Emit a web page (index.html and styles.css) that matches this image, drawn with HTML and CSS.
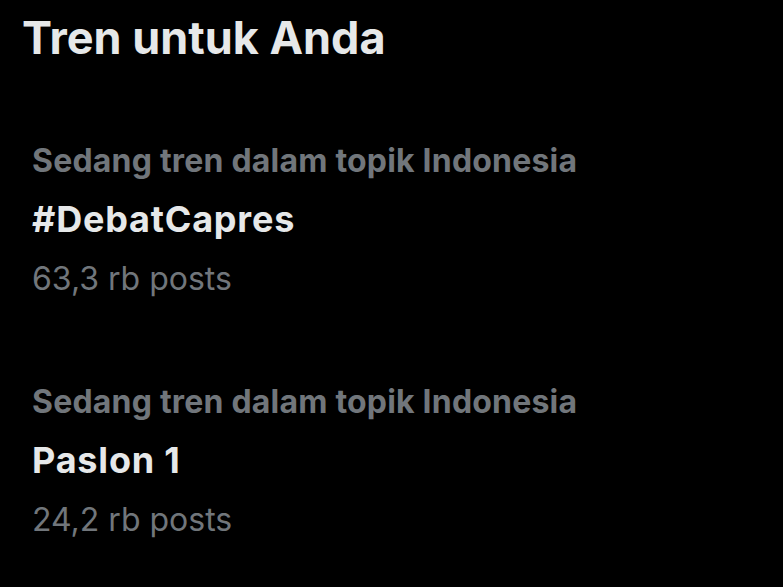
FILE: index.html
```html
<!DOCTYPE html>
<html>

<head>
  <title>Tren untuk Anda</title>
  <link rel="stylesheet" href="styles.css">
</head>

<body>
  <div class="panel">
    <h1 class="panel-title">Tren untuk Anda</h1>

    <div class="trend">
      <div class="trend-context">Sedang tren dalam topik Indonesia</div>
      <div class="trend-name">#DebatCapres</div>
      <div class="trend-count">63,3 rb posts</div>
    </div>

    <div class="trend">
      <div class="trend-context">Sedang tren dalam topik Indonesia</div>
      <div class="trend-name">Paslon 1</div>
      <div class="trend-count">24,2 rb posts</div>
    </div>
  </div>
</body>

</html>
```

FILE: styles.css
```css
body {
  margin: 0;
  background: #000;
  font-family: Inter, Roboto, "Liberation Sans", sans-serif;
}

.panel {
  height: 587px;
  overflow: hidden;
}

.panel-title {
  margin: 0;
  padding: 10px 0 0 22px;
  font-size: 45px;
  line-height: 55px;
  font-weight: 700;
  color: #e6e8e9;
}

.trend {
  padding: 0 0 0 32px;
  margin-top: 66px;
}

.trend + .trend {
  margin-top: 64px;
}

.trend-context {
  font-size: 32px;
  letter-spacing: 0.2px;
  line-height: 59px;
  font-weight: 700;
  color: #71767b;
}

.trend-name {
  font-size: 36px;
  letter-spacing: 0.8px;
  line-height: 59px;
  font-weight: 700;
  color: #e6e8e9;
}

.trend-count {
  font-size: 32px;
  line-height: 59px;
  color: #71767b;
}
```
